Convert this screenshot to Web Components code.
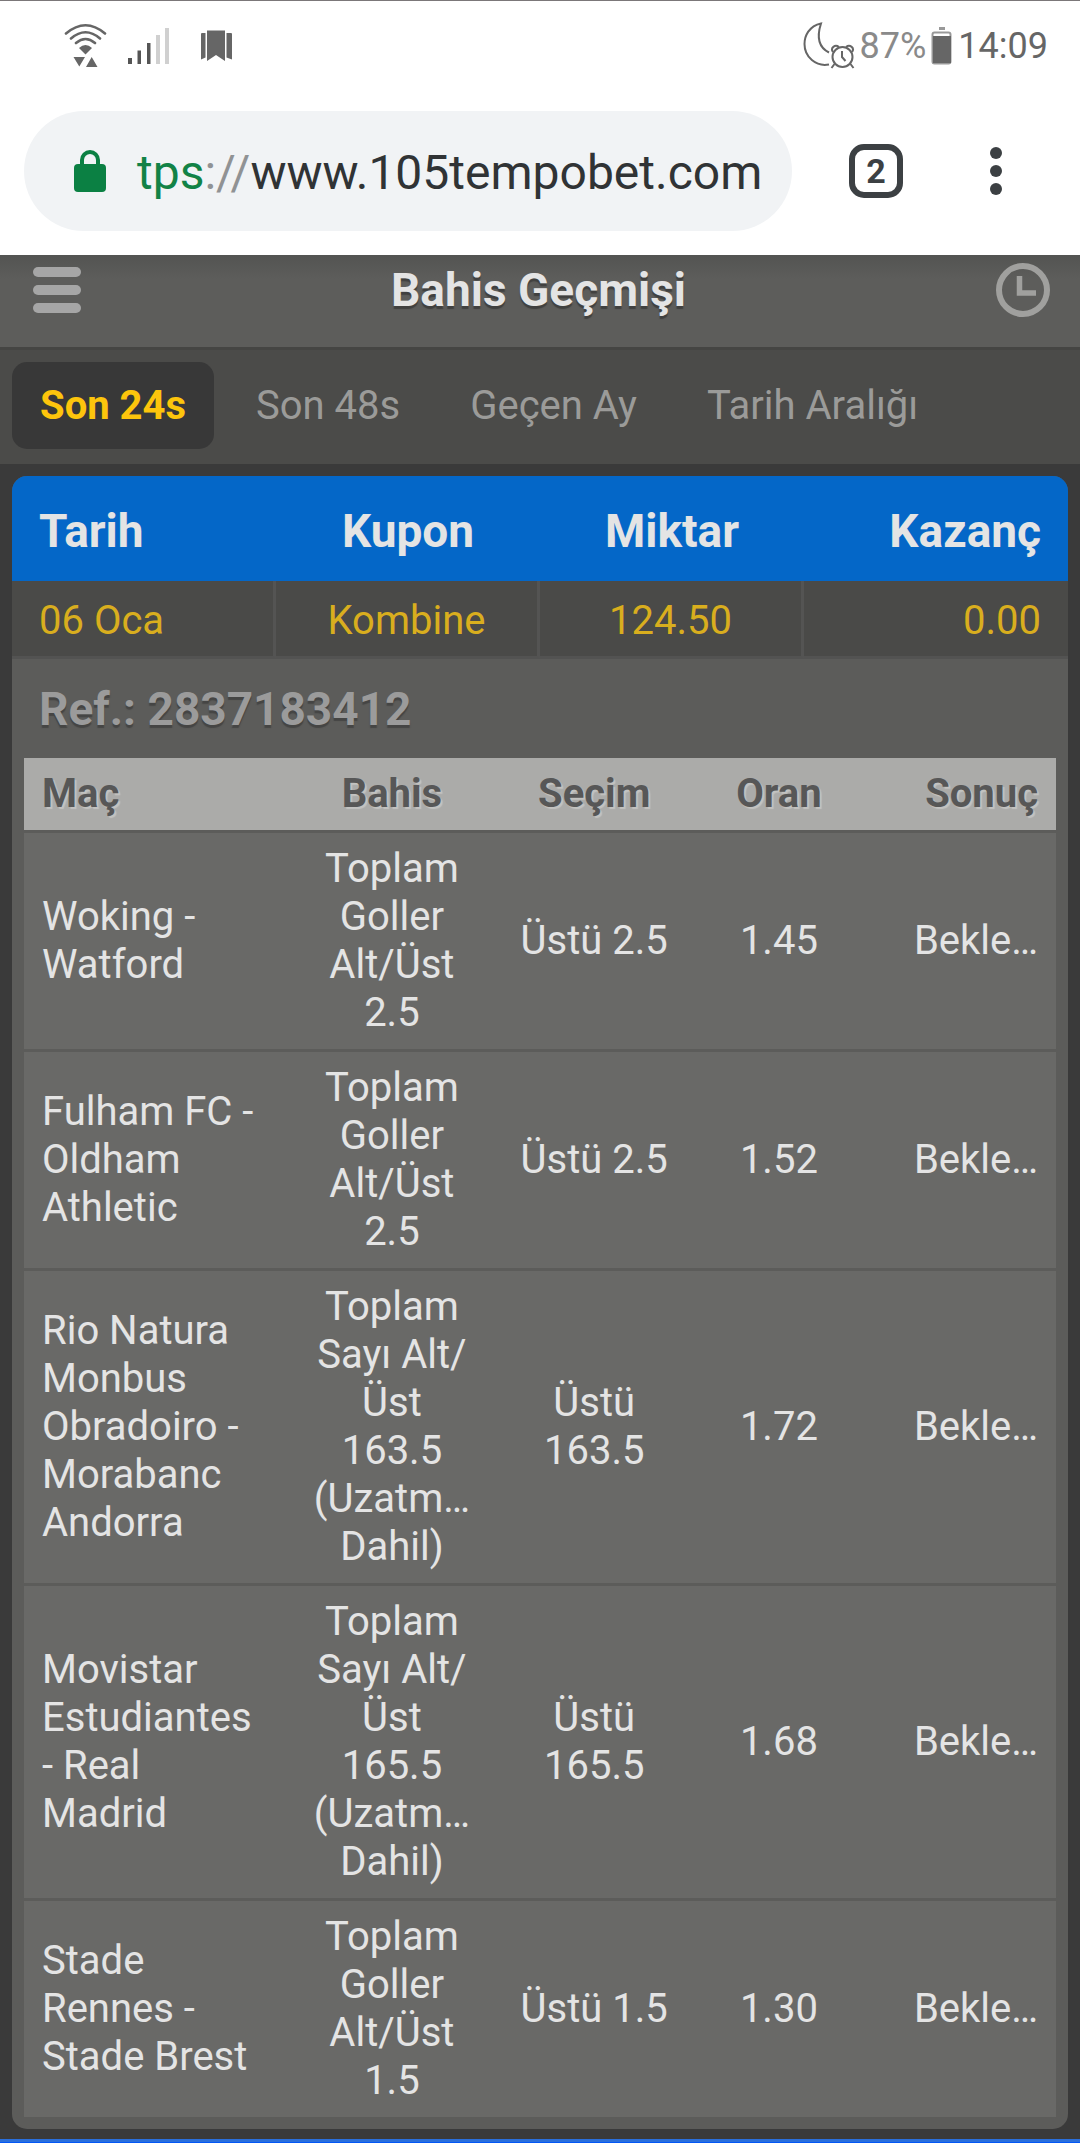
<!DOCTYPE html>
<html lang="tr">
<head>
<meta charset="utf-8">
<meta name="viewport" content="width=device-width, initial-scale=1">
<title>Bahis Geçmişi</title>
<style>
body { margin: 0; background: #3a3a3a; font-family: Roboto, sans-serif; font-size: 40px; line-height: 48px; color: #e4e4e4; }
</style>
</head>
<body>
<phone-status battery="87%" time="14:09"></phone-status>
<browser-bar scheme="tps" host="www.105tempobet.com" tabs="2"></browser-bar>
<app-header>Bahis Geçmişi</app-header>
<period-tabs>
  <period-tab active>Son 24s</period-tab>
  <period-tab>Son 48s</period-tab>
  <period-tab>Geçen Ay</period-tab>
  <period-tab>Tarih Aralığı</period-tab>
</period-tabs>
<coupon-card>
  <coupon-summary slot="summary"></coupon-summary>
  <span slot="ref">Ref.: 2837183412</span>
  <bet-table></bet-table>
</coupon-card>
<bottom-strip></bottom-strip>

<script>
const define = (name, html, setup) => {
  const template = document.createElement('template');
  template.innerHTML = html;
  customElements.define(name, class extends HTMLElement {
    constructor() {
      super();
      this.attachShadow({ mode: 'open' }).append(template.content.cloneNode(true));
    }
    connectedCallback() { if (setup) setup(this, this.shadowRoot); }
  });
};

define('phone-status', `
<style>
:host { display: flex; align-items: center; justify-content: space-between; box-sizing: border-box; height: 91px; border-top: 1px solid #7b7779; padding: 0 32px 0 64px; background: #fff; color: #666; font-size: 36px; line-height: 42px; }
div { display: flex; align-items: center; }
.left { gap: 20px; }
.right { gap: 5px; }
.pct { color: #8a8a8a; }
svg { display: block; }
</style>
<div class="left">
  <svg width="44" height="46" viewBox="64 22 44 46" fill="none" stroke="#666" stroke-width="2.6" stroke-linecap="round"><path d="M66 32.500Q85.500 16 105 32.500M71 37.500Q85.500 25 100 37.500M76 42Q85.500 34 95 42"/><path d="M79 47Q85.500 41 92 47L85.500 53.500Z" fill="#666" stroke="none"/><path d="M73.500 56H85L79.300 65.500ZM86 66L91.700 56L97.500 66Z" fill="#666" stroke="none"/></svg>
  <svg width="42" height="38" viewBox="128 24 42 38"><path fill="#555" d="M128 55h4v6h-4zM137.500 47.500h3.500V61h-3.500zM147 40h3.500v21H147z"/><path fill="#d0d0d0" d="M156 32h4v29h-4zM165 25h4v36h-4z"/></svg>
  <svg width="52" height="34" viewBox="190 27 52 34" fill="#666"><path d="M207 28.500h18V59l-9-6-9 6zM201 32q0-1 1-1h3.500v24.500L201 57.500zM232 32q0-1-1-1h-4.500v24.500L232 57.500z"/></svg>
</div>
<div class="right">
  <svg width="52" height="50" viewBox="802 20 52 50" fill="none" stroke="#666" stroke-width="2"><path d="M828 51.500Q813 44 820 22.500C808 25 803.500 35 803.500 43C803.500 56 815 66 828 63.500"/><circle cx="841.500" cy="56" r="10"/><path d="M841 50v6l3.500 4M833.500 63l-3 4M849.500 63l3 4M832 51c-3-4 2-8 6-5M851 51c3-4-2-8-6-5"/></svg>
  <span class="pct">87%</span>
  <svg width="22" height="40" viewBox="932 23 22 40"><path d="M940 24h6v3h-6z" fill="#999"/><rect x="933.500" y="29.500" width="18" height="31" rx="2" fill="#fff" stroke="#999" stroke-width="2"/><path d="M934 33h18v27h-18z" fill="#666"/></svg>
  <span class="time">14:09</span>
</div>`, (el, root) => {
  root.querySelector('.pct').textContent = el.getAttribute('battery');
  root.querySelector('.time').textContent = el.getAttribute('time');
});

define('browser-bar', `
<style>
:host { display: flex; align-items: center; box-sizing: border-box; padding: 20px 54px 24px 24px; background: #fff; }
button { font: inherit; border: 0; margin: 0; padding: 0; background: none; cursor: pointer; }
.address { flex: 1; display: flex; align-items: center; gap: 31px; min-width: 0; height: 120px; padding: 0 32px 0 50px; border-radius: 60px; background: #f1f3f5; color: #303335; font-size: 48px; line-height: 56px; white-space: nowrap; }
.url { padding-top: 4px; }
.scheme { color: #128246; }
.sep { color: #909294; }
.tabs { box-sizing: border-box; width: 54px; height: 54px; margin-left: 57px; border: 6px solid #3c4043; border-radius: 15px; color: #3c4043; font-size: 34px; font-weight: 700; line-height: 42px; }
.menu { width: 60px; height: 60px; margin-left: 63px; }
svg { display: block; flex: none; margin-inline: auto; }
.address svg { margin: 0; }
</style>
<button class="address" aria-label="Adres">
  <svg width="32" height="42" viewBox="0 0 32 42"><path d="M8 16V10a8 8 0 0 1 16 0v6" fill="none" stroke="#0b8043" stroke-width="4"/><rect y="14" width="32" height="28" rx="4" fill="#0b8043"/></svg>
  <span class="url"><span class="scheme"></span><span class="sep">://</span><span class="host"></span></span>
</button>
<button class="tabs" aria-label="Sekmeler"></button>
<button class="menu" aria-label="Menü"><svg width="12" height="48" viewBox="0 0 12 48" fill="#3c4043"><circle cx="6" cy="6" r="6"/><circle cx="6" cy="24" r="6"/><circle cx="6" cy="42" r="6"/></svg></button>`, (el, root) => {
  root.querySelector('.scheme').textContent = el.getAttribute('scheme');
  root.querySelector('.host').textContent = el.getAttribute('host');
  root.querySelector('.tabs').textContent = el.getAttribute('tabs');
});

define('app-header', `
<style>
:host { display: flex; align-items: center; justify-content: space-between; box-sizing: border-box; padding: 6px 30px 28px 33px; border-bottom: 3px solid #454543; background: linear-gradient(#535452, #5d5d5b 24px); }
h1 { margin: 0; font-size: 46px; line-height: 58px; font-weight: 700; text-shadow: 0 3px 1px #40403f; }
button { border: 0; padding: 0; background: none; cursor: pointer; }
svg { display: block; }
</style>
<button aria-label="Menü"><svg width="48" height="46" viewBox="0 0 48 46" fill="#a6a6a6"><rect width="48" height="10" rx="5"/><rect y="18" width="48" height="10" rx="5"/><rect y="36" width="48" height="10" rx="5"/></svg></button>
<h1><slot></slot></h1>
<button aria-label="Saat"><svg width="54" height="54" viewBox="0 0 54 54" fill="none" stroke="#a0a09e"><circle cx="27" cy="27" r="24" stroke-width="6"/><path d="M23.500 13v17H40" stroke-width="5.500"/></svg></button>`);

define('period-tabs', `
<style>
:host { display: flex; gap: 14px; padding: 12px 12px 15px; background: #4b4b49; }
</style>
<slot></slot>`);

define('period-tab', `
<style>
:host { display: block; color: #9b9b99; }
:host([active]) { color: #fdc50c; font-weight: 700; --tab-fill: #383838; }
button { display: block; height: 87px; padding: 0 28px; border: 0; border-radius: 15px; background: var(--tab-fill, transparent); font: inherit; color: inherit; cursor: pointer; }
</style>
<button><slot></slot></button>`);

define('coupon-card', `
<style>
:host { display: block; margin: 12px; margin-bottom: 10px; border-radius: 15px; overflow: hidden; background: #5c5c5a; }
.body { padding: 0 12px 12px; }
h2 { margin: 0; padding: 21px 15px 20px; font-size: 46px; line-height: 58px; font-weight: 700; color: #9b9b9b; text-shadow: 0 3px 1px #454544; }
</style>
<slot name="summary"></slot>
<div class="body"><h2><slot name="ref"></slot></h2><slot></slot></div>`);

define('coupon-summary', `
<style>
:host { display: block; }
table { width: 100%; table-layout: fixed; border-collapse: separate; border-spacing: 0; }
th, td { box-sizing: border-box; padding: 4px 27px 0; }
th { height: 105px; background: #0467c8; font-size: 46px; font-weight: 700; }
td { height: 78px; background: #4a4a48; border-bottom: 3px solid #535352; color: #d9ae1e; text-align: center; }
td:not(:last-child) { border-right: 3px solid #545453; }
th:first-child, td:first-child { text-align: left; }
th:last-child, td:last-child { text-align: right; }
</style>
<table>
  <thead><tr><th>Tarih</th><th>Kupon</th><th>Miktar</th><th>Kazanç</th></tr></thead>
  <tbody><tr><td>06 Oca</td><td>Kombine</td><td>124.50</td><td>0.00</td></tr></tbody>
</table>`);

const bets = [
  ['Woking -|Watford', 'Toplam|Goller|Alt/Üst|2.5', 'Üstü 2.5', '1.45', 'Bekle…'],
  ['Fulham FC -|Oldham|Athletic', 'Toplam|Goller|Alt/Üst|2.5', 'Üstü 2.5', '1.52', 'Bekle…'],
  ['Rio Natura|Monbus|Obradoiro -|Morabanc|Andorra', 'Toplam|Sayı Alt/|Üst|163.5|(Uzatm…|Dahil)', 'Üstü|163.5', '1.72', 'Bekle…'],
  ['Movistar|Estudiantes|- Real|Madrid', 'Toplam|Sayı Alt/|Üst|165.5|(Uzatm…|Dahil)', 'Üstü|165.5', '1.68', 'Bekle…'],
  ['Stade|Rennes -|Stade Brest', 'Toplam|Goller|Alt/Üst|1.5', 'Üstü 1.5', '1.30', 'Bekle…'],
];

define('bet-table', `
<style>
:host { display: block; }
table { width: 100%; table-layout: fixed; border-collapse: separate; border-spacing: 0; }
.match { width: 25%; }
.bet { width: 21.3%; }
th { padding: 12px 0; border-bottom: 3px solid #5c5c5a; background: #ababa9; color: #575757; font-weight: 700; text-shadow: 2px 2px 1px #c3c3c1; }
td { padding: 12px 0; border-bottom: 3px solid #5c5c5a; background: #696967; text-align: center; white-space: nowrap; }
tbody tr:last-child td { border-bottom: 0; }
th:first-child, td:first-child { padding-left: 18px; text-align: left; }
th:last-child, td:last-child { padding-right: 18px; text-align: right; }
</style>
<table>
  <colgroup><col class="match"><col class="bet"><col><col><col></colgroup>
  <thead><tr><th>Maç</th><th>Bahis</th><th>Seçim</th><th>Oran</th><th>Sonuç</th></tr></thead>
  <tbody></tbody>
</table>`, (el, root) => {
  root.querySelector('tbody').innerHTML = bets.map(row =>
    '<tr>' + row.map(cell => '<td>' + cell.split('|').join('<br>') + '</td>').join('') + '</tr>').join('');
});

define('bottom-strip', `
<style>
:host { display: block; box-sizing: border-box; height: 4px; border-bottom: 1px solid #0357f5; background: #2a6fdb; }
</style>`);
</script>
</body>
</html>
